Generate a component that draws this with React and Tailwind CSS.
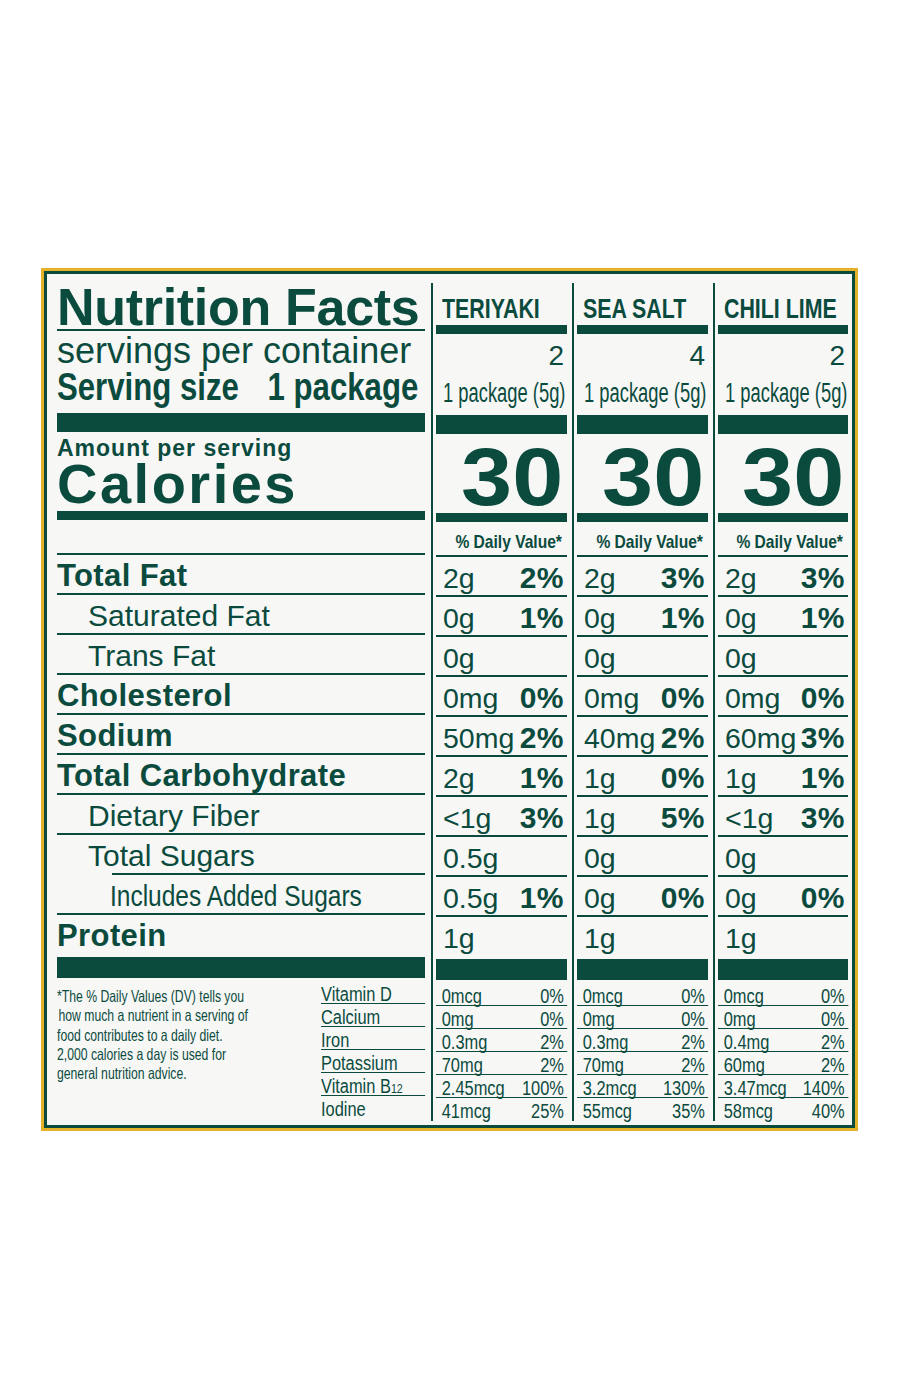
import React from "react";

const cols = [
  {
    name: "TERIYAKI",
    servings: "2",
    rows: [["2g","2%"],["0g","1%"],["0g",""],["0mg","0%"],["50mg","2%"],["2g","1%"],["<1g","3%"],["0.5g",""],["0.5g","1%"],["1g",""]],
    vit: [["0mcg","0%"],["0mg","0%"],["0.3mg","2%"],["70mg","2%"],["2.45mcg","100%"],["41mcg","25%"]],
    last: false,
  },
  {
    name: "SEA SALT",
    servings: "4",
    rows: [["2g","3%"],["0g","1%"],["0g",""],["0mg","0%"],["40mg","2%"],["1g","0%"],["1g","5%"],["0g",""],["0g","0%"],["1g",""]],
    vit: [["0mcg","0%"],["0mg","0%"],["0.3mg","2%"],["70mg","2%"],["3.2mcg","130%"],["55mcg","35%"]],
    last: false,
  },
  {
    name: "CHILI LIME",
    servings: "2",
    rows: [["2g","3%"],["0g","1%"],["0g",""],["0mg","0%"],["60mg","3%"],["1g","1%"],["<1g","3%"],["0g",""],["0g","0%"],["1g",""]],
    vit: [["0mcg","0%"],["0mg","0%"],["0.4mg","2%"],["60mg","2%"],["3.47mcg","140%"],["58mcg","40%"]],
    last: true,
  },
];

const leftRows = [
  { label: "Total Fat", kind: "bold" },
  { label: "Saturated Fat", kind: "reg" },
  { label: "Trans Fat", kind: "reg" },
  { label: "Cholesterol", kind: "bold" },
  { label: "Sodium", kind: "bold" },
  { label: "Total Carbohydrate", kind: "bold" },
  { label: "Dietary Fiber", kind: "reg" },
  { label: "Total Sugars", kind: "reg", indentLine: true },
  { label: "Includes Added Sugars", kind: "narrow" },
  { label: "Protein", kind: "bold", last: true },
];

const vitLabels = ["Vitamin D", "Calcium", "Iron", "Potassium", "VITB12", "Iodine"];

function LeftRow({ r }) {
  let label;
  if (r.kind === "bold") {
    label = (
      <div className="font-bold text-[31px] leading-[41px] tracking-[0.4px] whitespace-nowrap">{r.label}</div>
    );
  } else if (r.kind === "reg") {
    label = <div className="text-[30px] leading-[41px] pl-[31px] whitespace-nowrap">{r.label}</div>;
  } else {
    label = (
      <div className="text-[29.5px] leading-[42px] pl-[53px] whitespace-nowrap">
        <span className="inline-block origin-left scale-x-[0.83]">{r.label}</span>
      </div>
    );
  }
  if (r.last) {
    return <div className="h-[42px]">{label}</div>;
  }
  if (r.indentLine) {
    return (
      <div className="h-[40px] flex flex-col">
        <div className="h-[38px]">{label}</div>
        <div className="h-[2px] ml-[55px] bg-[#0b4b3e]"></div>
      </div>
    );
  }
  return <div className="h-[40px] border-b-2 border-[#0b4b3e]">{label}</div>;
}

function Column({ c }) {
  return (
    <div
      className={
        c.last
          ? "border-l-2 border-[#0b4b3e] pl-[3px] h-[838px]"
          : "border-l-2 border-[#0b4b3e] pl-[3px] pr-[5px] h-[838px]"
      }
    >
      <div className={c.last ? "w-[130px]" : "w-[131px]"}>
        <div className="h-[42px] pl-[6px] font-bold text-[28.5px] leading-[50px] whitespace-nowrap">
          <span className="inline-block origin-left scale-x-[0.75]">{c.name}</span>
        </div>
        <div className="h-[9px] bg-[#0b4b3e]"></div>
        <div className="h-[38px] text-right pr-[3px] text-[28px] leading-[43px]">{c.servings}</div>
        <div className="h-[40px] pl-[7px] text-[27px] leading-[43px] whitespace-nowrap">
          <span className="inline-block origin-left scale-x-[0.68]">1 package (5g)</span>
        </div>
        <div className="h-[3px]"></div>
        <div className="h-[19px] bg-[#0b4b3e]"></div>
        <div className="h-[79px] text-right pr-[4px] font-bold text-[82px] leading-[85px]">
          <span className="inline-block origin-right scale-x-[1.12]">30</span>
        </div>
        <div className="h-[9px] bg-[#0b4b3e]"></div>
        <div className="h-[35px] border-b-2 border-[#0b4b3e] flex justify-end pr-[5px] font-bold text-[19px] leading-[39px] whitespace-nowrap">
          <span className="inline-block origin-right scale-x-[0.82]">% Daily Value*</span>
        </div>
        {c.rows.map((v, i) => (
          <div
            key={i}
            className={
              i === c.rows.length - 1
                ? "h-[42px] flex items-baseline justify-between pl-[7px] pr-[3px]"
                : "h-[40px] border-b-2 border-[#0b4b3e] flex items-baseline justify-between pl-[7px] pr-[3px]"
            }
          >
            <span className="text-[28.5px] leading-[42px] whitespace-nowrap">{v[0]}</span>
            <span className="font-bold text-[30px] leading-[42px] tracking-[0.5px]">{v[1]}</span>
          </div>
        ))}
        <div className="h-[21px] bg-[#0b4b3e]"></div>
        <div className="pt-[3px]">
          <div
            className={
              c.last
                ? "w-[158.5px] origin-left scale-x-[0.82]"
                : "w-[160px] origin-left scale-x-[0.82]"
            }
          >
            {c.vit.map((v, i) => (
              <div
                key={i}
                className={
                  i === c.vit.length - 1
                    ? "h-[23px] flex justify-between pl-[7px] pr-[4px] text-[20px] leading-[26px] whitespace-nowrap"
                    : "h-[23px] border-b-[1.5px] border-[#0b4b3e] flex justify-between pl-[7px] pr-[4px] text-[20px] leading-[26px] whitespace-nowrap"
                }
              >
                <span>{v[0]}</span>
                <span>{v[1]}</span>
              </div>
            ))}
          </div>
        </div>
      </div>
    </div>
  );
}

export default function App() {
  return (
    <div className="bg-white min-h-[1400px] w-[900px] pt-[268px] pl-[41px] text-[#0b4b3e] font-['Liberation_Sans',Arial,sans-serif]">
      <div className="w-[817px] h-[863px] border-[3px] border-[#e4b128]">
        <div className="h-full border-[3px] border-[#0b4b3e] bg-[#f7f7f6] flex pl-[10px] pt-[9px]">
          {/* Left column */}
          <div className="w-[368px] mr-[6px]">
            <div className="h-[50px] border-b-2 border-[#0b4b3e]">
              <div className="font-bold text-[52px] leading-[52px] tracking-[-0.3px] whitespace-nowrap -mt-[2px]">
                Nutrition Facts
              </div>
            </div>
            <div className="h-[39px] text-[36px] leading-[39px] whitespace-nowrap">servings per container</div>
            <div className="h-[40px] font-bold text-[38px] leading-[35px] whitespace-nowrap">
              <span className="inline-block origin-left scale-x-[0.82]">
                Serving size<span className="inline-block w-[35px]"></span>1 package
              </span>
            </div>
            <div className="h-[3px]"></div>
            <div className="h-[19px] bg-[#0b4b3e]"></div>
            <div className="h-[79px] pt-[5px] whitespace-nowrap">
              <div className="font-bold text-[23px] leading-[23px] tracking-[1px]">Amount per serving</div>
              <div className="font-bold text-[56px] leading-[47px] tracking-[2.5px]">Calories</div>
            </div>
            <div className="h-[9px] bg-[#0b4b3e]"></div>
            <div className="h-[35px] border-b-2 border-[#0b4b3e]"></div>
            {leftRows.map((r, i) => (
              <LeftRow key={i} r={r} />
            ))}
            <div className="h-[21px] bg-[#0b4b3e]"></div>
            <div className="pt-[3px] flex">
              <div className="w-[264px] pt-[6px]">
                <div className="origin-left scale-x-[0.74] text-[16.5px] leading-[19.3px] whitespace-nowrap">
                  *The % Daily Values (DV) tells you
                  <br />
                  <span className="pl-[2px]">how much a nutrient in a serving of</span>
                  <br />
                  food contributes to a daily diet.
                  <br />
                  2,000 calories a day is used for
                  <br />
                  general nutrition advice.
                </div>
              </div>
              <div className="w-[104px]">
                <div className="w-[127px] origin-left scale-x-[0.82]">
                  {vitLabels.map((l, i) => (
                    <div
                      key={i}
                      className={
                        i === vitLabels.length - 1
                          ? "h-[23px] text-[20px] leading-[26px] whitespace-nowrap"
                          : "h-[23px] border-b-[1.5px] border-[#0b4b3e] text-[20px] leading-[26px] whitespace-nowrap"
                      }
                    >
                      {l === "VITB12" ? (
                        <span>
                          Vitamin B<span className="text-[13px]">12</span>
                        </span>
                      ) : (
                        l
                      )}
                    </div>
                  ))}
                </div>
              </div>
            </div>
          </div>
          {cols.map((c, i) => (
            <Column key={i} c={c} />
          ))}
        </div>
      </div>
    </div>
  );
}
